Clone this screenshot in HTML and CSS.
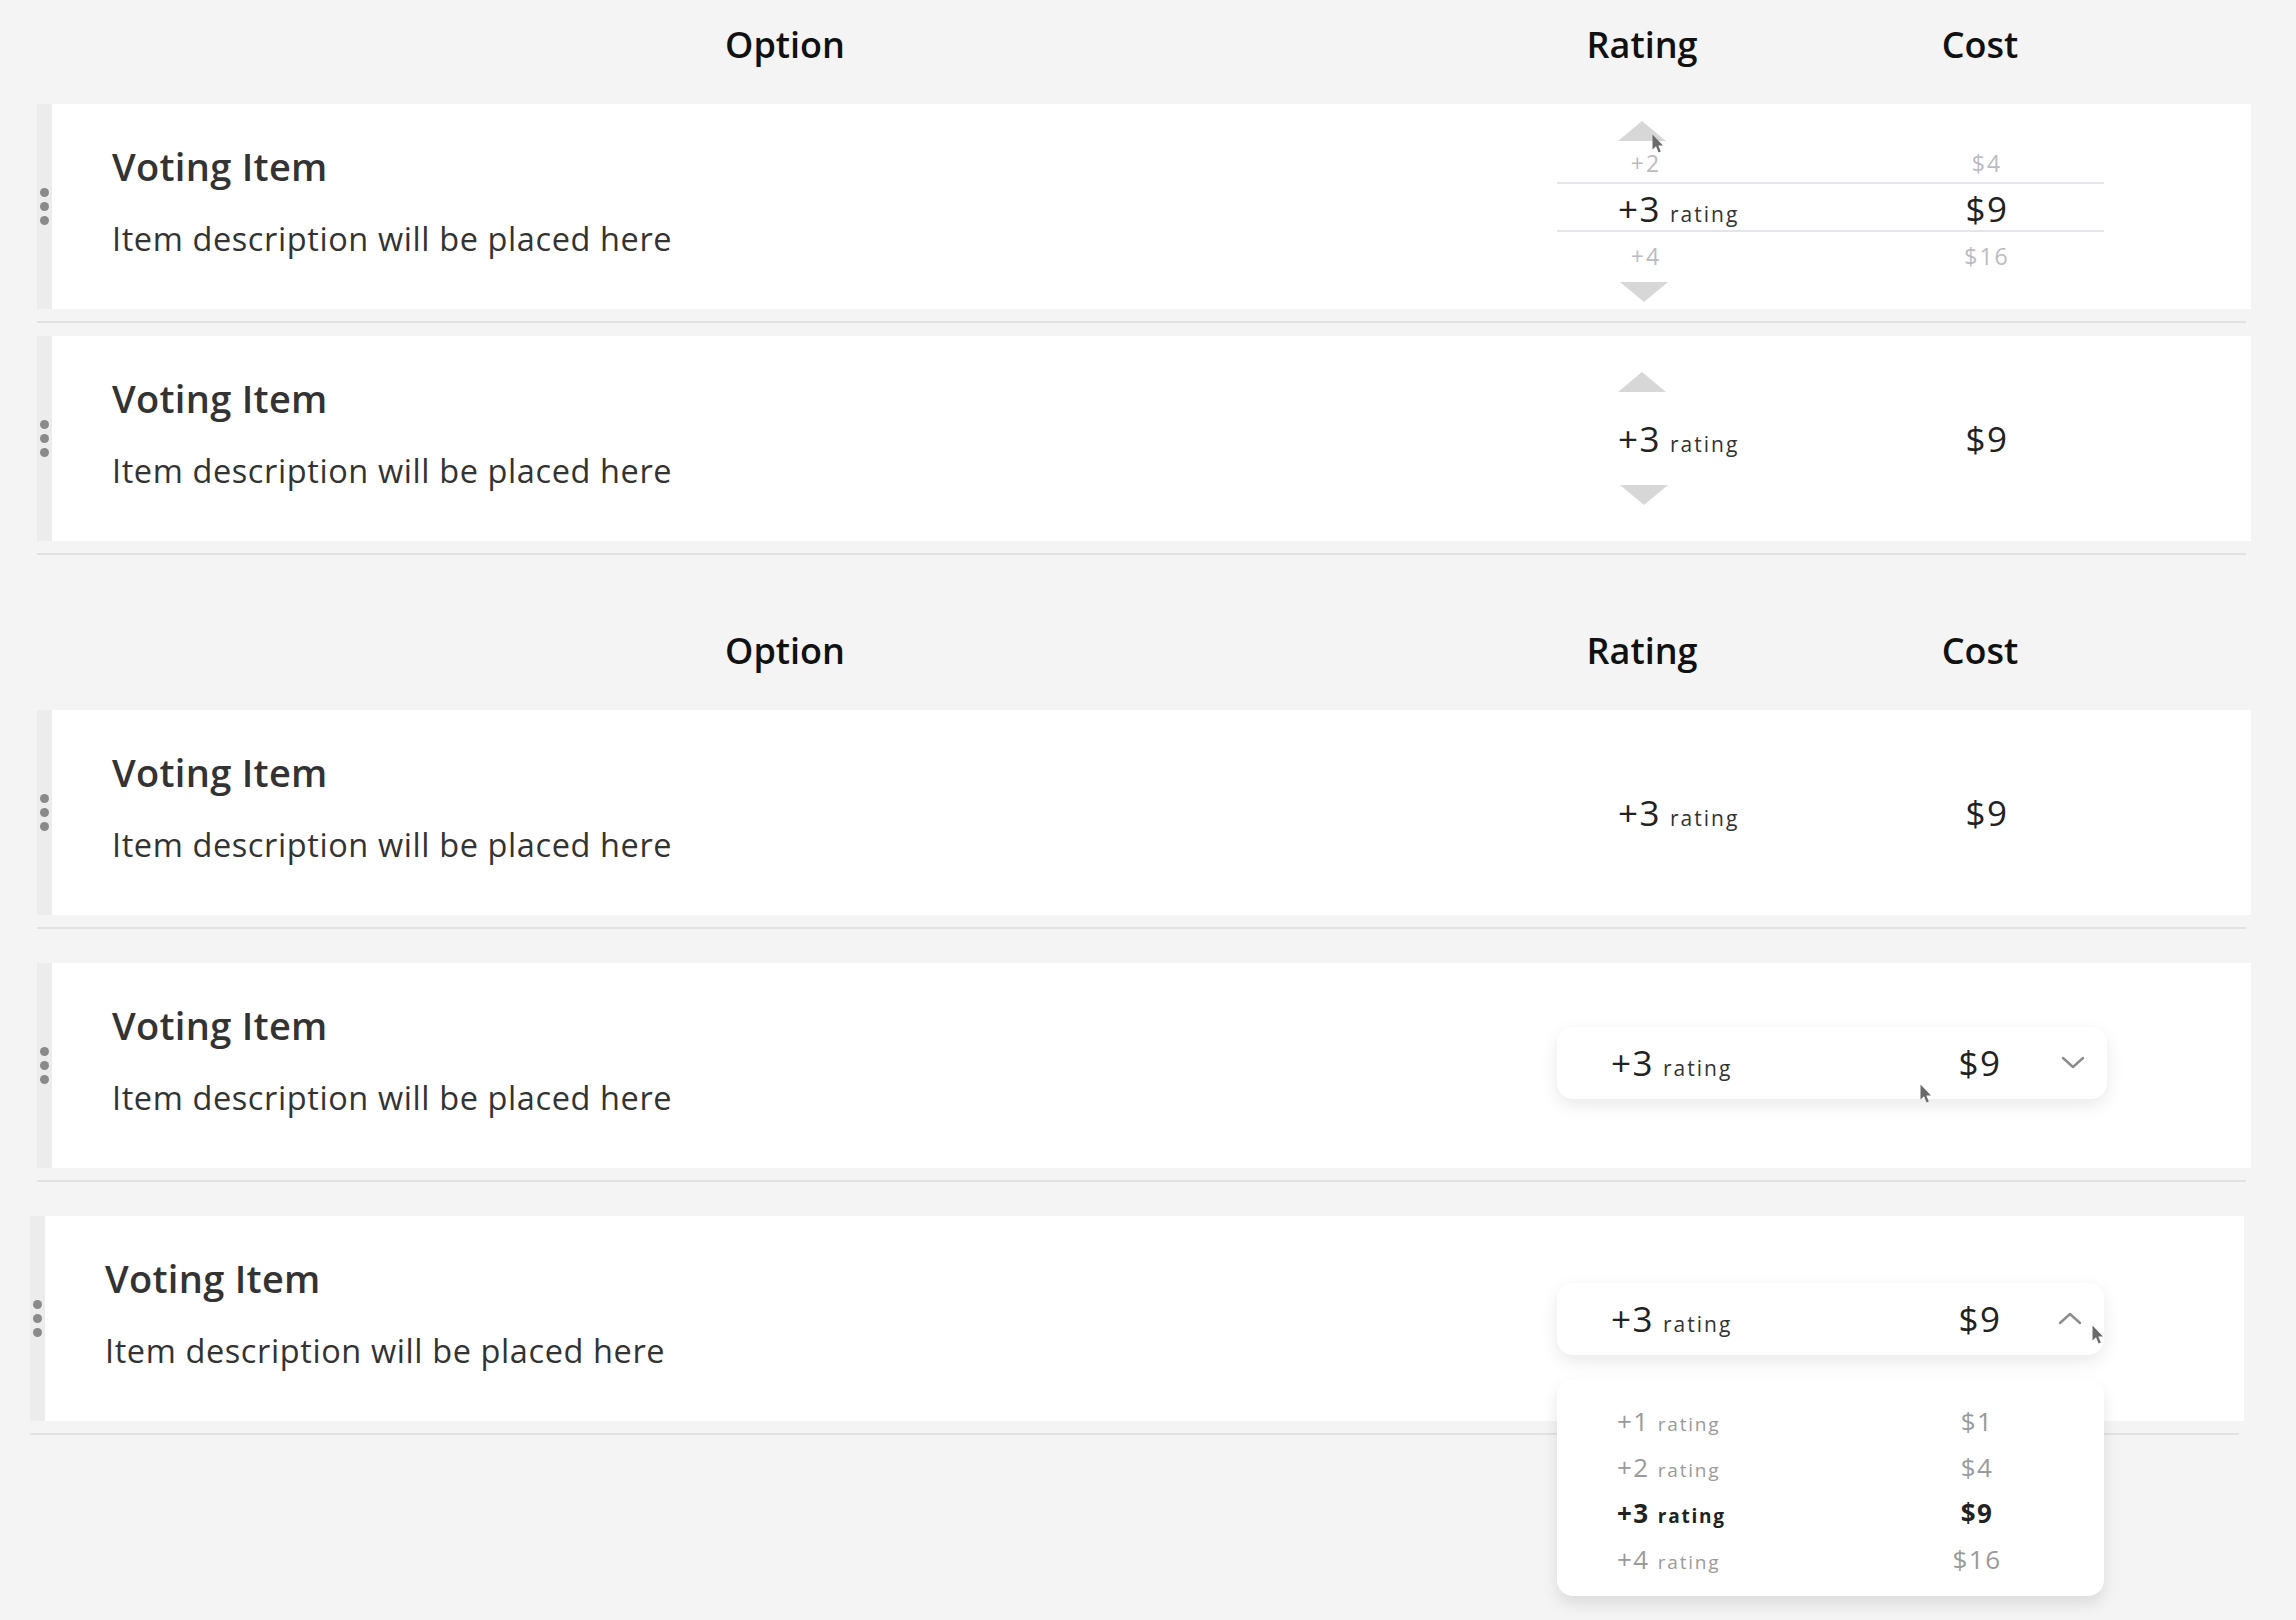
FILE: index.html
```html
<!DOCTYPE html>
<html lang="en">
<head>
<meta charset="utf-8">
<title>Voting items</title>
<link rel="stylesheet" href="styles.css">
</head>
<body>
<main class="page">
  <section class="group group--tight">
    <header class="table-head">
      <div class="th th--option">Option</div>
      <div class="th-values">
        <div class="th th--rating"><span>Rating</span></div>
        <div class="th th--cost">Cost</div>
      </div>
    </header>

    <div class="row">
      <article class="card">
        <div class="handle"><i></i><i></i><i></i></div>
        <div class="option">
          <h3 class="title">Voting Item</h3>
          <p class="desc">Item description will be placed here</p>
        </div>
        <div class="values values--picker">
          <div class="arrow-row"><span class="tri tri--up"></span></div>
          <div class="val-row pick-minor pick-minor--prev">
            <div class="rating"><span class="num">+2</span></div>
            <div class="cost">$4</div>
          </div>
          <div class="val-row pick-current">
            <div class="rating"><span class="num">+3</span><span class="unit">rating</span></div>
            <div class="cost">$9</div>
          </div>
          <div class="val-row pick-minor pick-minor--next">
            <div class="rating"><span class="num">+4</span></div>
            <div class="cost">$16</div>
          </div>
          <div class="arrow-row arrow-row--down"><span class="tri tri--down"></span></div>
          <svg class="cursor cursor--one" viewBox="0 0 12 20" width="12" height="20"><path d="M0.5 0.5 L0.5 15.5 L4 12.2 L6.6 18.6 L8.8 17.6 L6.3 11.4 L11 11.4 Z"/></svg>
        </div>
      </article>
      <hr class="divider">
    </div>

    <div class="row">
      <article class="card">
        <div class="handle"><i></i><i></i><i></i></div>
        <div class="option">
          <h3 class="title">Voting Item</h3>
          <p class="desc">Item description will be placed here</p>
        </div>
        <div class="values values--spinner">
          <div class="arrow-row"><span class="tri tri--up"></span></div>
          <div class="val-row">
            <div class="rating"><span class="num">+3</span><span class="unit">rating</span></div>
            <div class="cost">$9</div>
          </div>
          <div class="arrow-row arrow-row--down"><span class="tri tri--down"></span></div>
        </div>
      </article>
      <hr class="divider">
    </div>
  </section>

  <section class="group group--loose">
    <header class="table-head">
      <div class="th th--option">Option</div>
      <div class="th-values">
        <div class="th th--rating"><span>Rating</span></div>
        <div class="th th--cost">Cost</div>
      </div>
    </header>

    <div class="row">
      <article class="card">
        <div class="handle"><i></i><i></i><i></i></div>
        <div class="option">
          <h3 class="title">Voting Item</h3>
          <p class="desc">Item description will be placed here</p>
        </div>
        <div class="values">
          <div class="val-row">
            <div class="rating"><span class="num">+3</span><span class="unit">rating</span></div>
            <div class="cost">$9</div>
          </div>
        </div>
      </article>
      <hr class="divider">
    </div>

    <div class="row">
      <article class="card">
        <div class="handle"><i></i><i></i><i></i></div>
        <div class="option">
          <h3 class="title">Voting Item</h3>
          <p class="desc">Item description will be placed here</p>
        </div>
        <div class="values">
          <div class="dropdown">
            <div class="rating"><span class="num">+3</span><span class="unit">rating</span></div>
            <div class="cost">$9</div>
            <svg class="chev" viewBox="0 0 24 13" width="24" height="13"><polyline points="2,2 12,11 22,2"/></svg>
          </div>
          <svg class="cursor cursor--two" viewBox="0 0 12 20" width="12" height="20"><path d="M0.5 0.5 L0.5 15.5 L4 12.2 L6.6 18.6 L8.8 17.6 L6.3 11.4 L11 11.4 Z"/></svg>
        </div>
      </article>
      <hr class="divider">
    </div>

    <div class="row row--shift">
      <article class="card">
        <div class="handle"><i></i><i></i><i></i></div>
        <div class="option">
          <h3 class="title">Voting Item</h3>
          <p class="desc">Item description will be placed here</p>
        </div>
        <div class="values">
          <div class="dropdown dropdown--open">
            <div class="rating"><span class="num">+3</span><span class="unit">rating</span></div>
            <div class="cost">$9</div>
            <svg class="chev" viewBox="0 0 24 13" width="24" height="13"><polyline points="2,11 12,2 22,11"/></svg>
            <ul class="menu">
              <li class="menu-item"><div class="rating"><span class="num">+1</span><span class="unit">rating</span></div><div class="cost">$1</div></li>
              <li class="menu-item"><div class="rating"><span class="num">+2</span><span class="unit">rating</span></div><div class="cost">$4</div></li>
              <li class="menu-item menu-item--selected"><div class="rating"><span class="num">+3</span><span class="unit">rating</span></div><div class="cost">$9</div></li>
              <li class="menu-item"><div class="rating"><span class="num">+4</span><span class="unit">rating</span></div><div class="cost">$16</div></li>
            </ul>
          </div>
          <svg class="cursor cursor--three" viewBox="0 0 12 20" width="12" height="20"><path d="M0.5 0.5 L0.5 15.5 L4 12.2 L6.6 18.6 L8.8 17.6 L6.3 11.4 L11 11.4 Z"/></svg>
        </div>
      </article>
      <hr class="divider">
    </div>
  </section>
</main>
</body>
</html>
```

FILE: styles.css
```css
html, body {
  margin: 0;
  padding: 0;
  background: #f4f4f4;
  font-family: "Open Sans", "Liberation Sans", sans-serif;
  color: #333;
}

.page {
  padding: 0 45px 240px 37px;
}

.group--loose {
  padding-top: 38px;
}

/* header */
.table-head {
  display: grid;
  grid-template-columns: 15px 1fr 547px;
  padding: 20px 147px 0 0;
  margin-bottom: 34px;
  font-size: 36px;
  font-weight: 600;
  line-height: 50px;
  color: #111;
}

.th--option {
  grid-column: 2;
  text-align: center;
  padding-right: 39px;
}

.th-values {
  display: grid;
  grid-template-columns: 309px 238px;
}

.th--rating {
  padding-left: 61px;
}

.th--rating span {
  display: flex;
  width: 48px;
  justify-content: center;
  white-space: nowrap;
}

.th--cost {
  text-align: center;
  padding-right: 10px;
}

/* rows */
.card {
  position: relative;
  display: grid;
  grid-template-columns: 15px 1fr 547px;
  padding-right: 147px;
  height: 205px;
  box-sizing: border-box;
  background: #fff;
}

.row--shift {
  margin-left: -7px;
  margin-right: 7px;
}

.row--shift .card {
  padding-right: 140px;
}

.divider {
  border: 0;
  height: 2px;
  background: #e2e2e2;
  margin: 12px 5px 13px 0;
}

.group--loose .divider {
  margin-bottom: 34px;
}

.group--loose .row:last-child .divider {
  margin-bottom: 0;
}

.handle {
  background: #ececec;
  display: flex;
  flex-direction: column;
  align-items: center;
  justify-content: center;
  gap: 5px;
}

.handle i {
  display: block;
  width: 9px;
  height: 9px;
  border-radius: 50%;
  background: #8a8a8a;
}

.option {
  padding: 37px 0 0 60px;
}

.title {
  margin: 0 0 27px;
  font-size: 38px;
  font-weight: 600;
  letter-spacing: 0.3px;
  line-height: 50px;
  color: #333;
}

.desc {
  margin: 0;
  font-size: 32.5px;
  letter-spacing: 0.6px;
  line-height: 41px;
  color: #333;
}

/* values */
.values {
  position: relative;
  display: flex;
  flex-direction: column;
  justify-content: center;
}

.val-row {
  display: grid;
  grid-template-columns: 309px 238px;
  align-items: baseline;
}

.rating {
  padding-left: 61px;
  display: flex;
  align-items: baseline;
  white-space: nowrap;
}

.num {
  font-size: 35px;
  letter-spacing: 1.5px;
  line-height: 43px;
  color: #222;
}

.unit {
  font-size: 21px;
  letter-spacing: 2px;
  margin-left: 9px;
  color: #333;
}

.cost {
  text-align: center;
  font-size: 35px;
  letter-spacing: 1.5px;
  line-height: 43px;
  color: #222;
  padding-left: 4px;
}

.arrow-row {
  display: flex;
  padding-left: 61px;
  height: 20px;
}

.arrow-row--down {
  padding-left: 63px;
}

.tri {
  width: 0;
  height: 0;
  border-left: 24px solid transparent;
  border-right: 24px solid transparent;
}

.tri--up {
  border-bottom: 20px solid #d7d7d7;
}

.tri--down {
  border-top: 20px solid #d7d7d7;
}

/* spinner */
.values--spinner {
  gap: 25px;
}

/* picker */
.values--picker {
  justify-content: flex-start;
  padding-top: 17px;
}

.pick-minor .num,
.pick-minor .cost {
  font-size: 23px;
  letter-spacing: 2px;
  line-height: 28px;
  color: #bbbbc2;
}

.pick-minor .num {
  width: 48px;
  text-align: center;
  padding-left: 4px;
}

.pick-minor--prev {
  margin-top: 8px;
  padding-bottom: 5px;
  border-bottom: 2px solid #e4e4ea;
}

.pick-current {
  padding-top: 3px;
  border-bottom: 2px solid #e4e4ea;
}

.pick-minor--next {
  padding-top: 10px;
}

.values--picker .arrow-row--down {
  margin-top: 12px;
}

/* dropdown */
.dropdown {
  position: relative;
  display: flex;
  align-items: center;
  width: 550px;
  height: 72px;
  margin-top: -6px;
  padding: 0 22px 0 54px;
  box-sizing: border-box;
  background: #fff;
  border-radius: 16px;
  box-shadow: 0 6px 18px rgba(0, 0, 0, 0.09);
}

.dropdown--open {
  margin-top: 0;
  width: 547px;
}

.dropdown .rating {
  flex: 1;
  padding-left: 0;
}

.dropdown .cost {
  width: 86px;
  padding-left: 0;
}

.chev {
  margin-left: 38px;
  fill: none;
  stroke: #8c8c8c;
  stroke-width: 2.4;
  stroke-linecap: round;
  stroke-linejoin: round;
}

.dropdown--open .chev {
  margin-left: 35px;
}

.menu {
  position: absolute;
  z-index: 2;
  top: 96px;
  left: 0;
  width: 547px;
  margin: 0;
  padding: 19px 0 14px;
  list-style: none;
  box-sizing: border-box;
  background: #fff;
  border-radius: 16px;
  box-shadow: 0 8px 16px rgba(0, 0, 0, 0.1);
}

.menu-item {
  display: flex;
  align-items: baseline;
  height: 46px;
  padding-left: 60px;
}

.menu-item .rating {
  flex: 1;
  padding-left: 0;
}

.menu-item .num {
  font-size: 26px;
  letter-spacing: 1.5px;
  line-height: 46px;
  color: #9a9a9a;
}

.menu-item .unit {
  font-size: 19px;
  letter-spacing: 1.8px;
  margin-left: 8px;
  color: #9a9a9a;
}

.menu-item .cost {
  width: 80px;
  margin-right: 87px;
  padding-left: 0;
  font-size: 26px;
  letter-spacing: 1.5px;
  line-height: 46px;
  color: #9a9a9a;
}

.menu-item--selected .num,
.menu-item--selected .unit,
.menu-item--selected .cost {
  font-weight: 700;
  color: #222;
}

/* pointer cursors */
.cursor {
  position: absolute;
  z-index: 3;
  fill: #6b6b6b;
}

.cursor--one {
  left: 95px;
  top: 30px;
}

.cursor--two {
  left: 363px;
  top: 121px;
}

.cursor--three {
  left: 535px;
  top: 109px;
}
```
